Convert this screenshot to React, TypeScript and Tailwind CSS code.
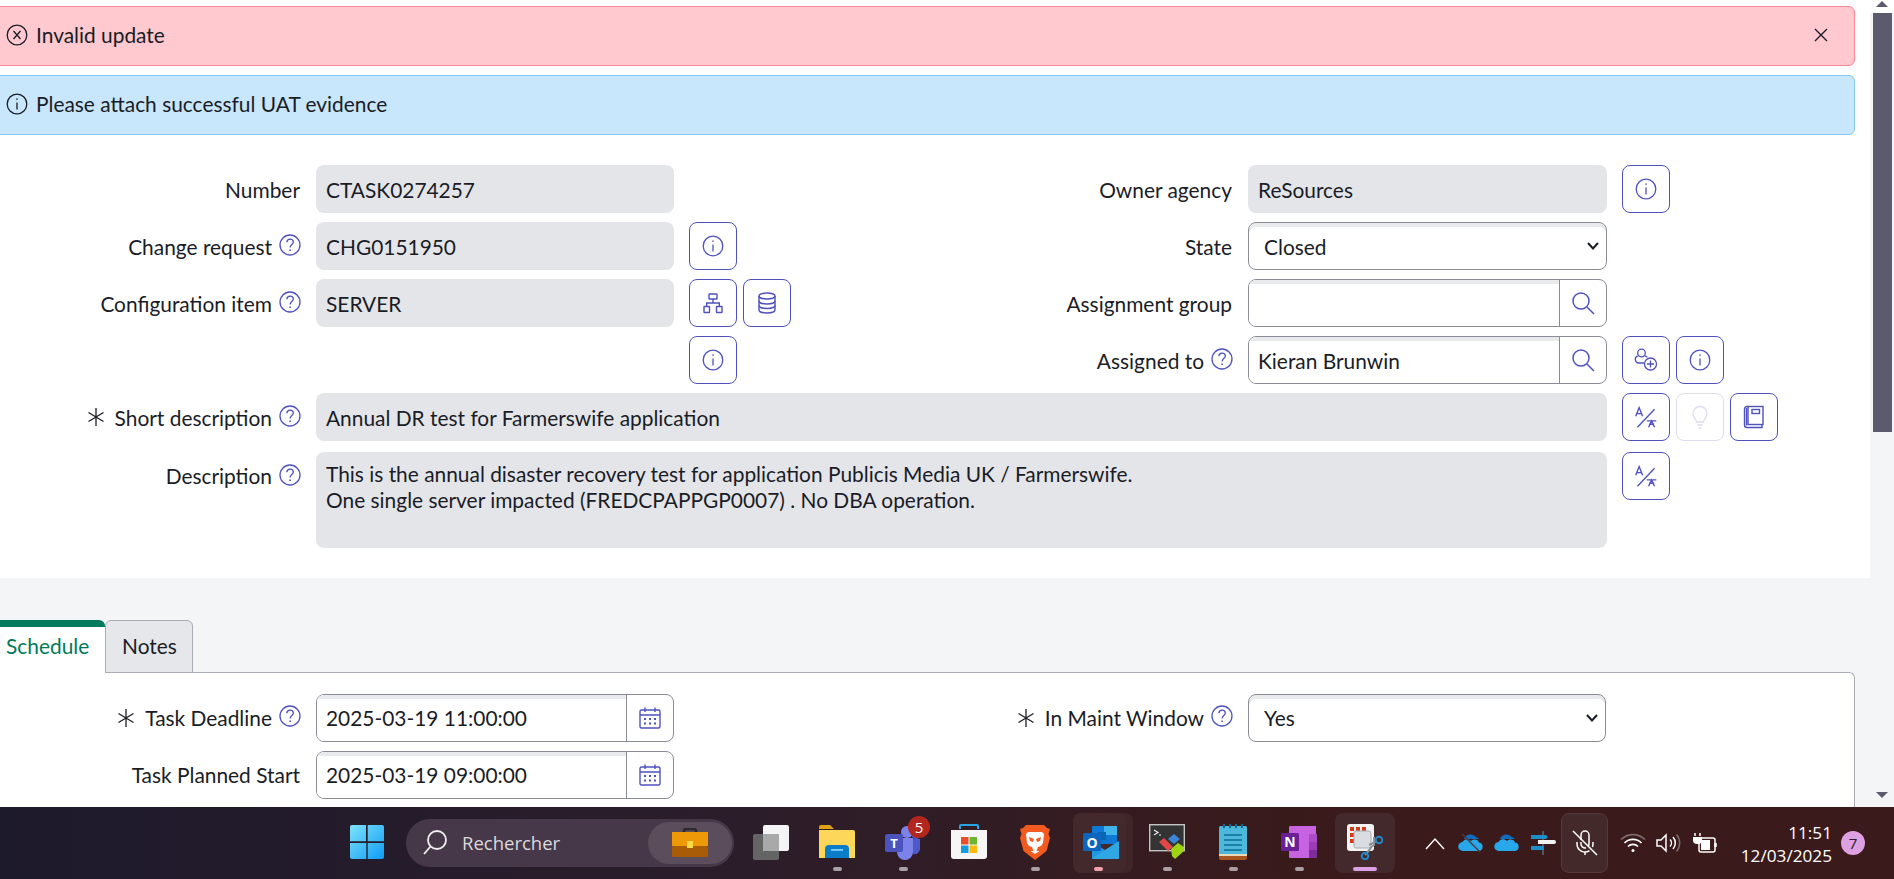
import React from "react";

const line = "fill-none stroke-current";

function InfoIcon({ size = 24 }: { size?: number }) {
  return (
    <svg width={size} height={size} viewBox="0 0 24 24" className={line} strokeWidth={1.3}>
      <circle cx="12" cy="12" r="9.8" />
      <path d="M12 10.500v7" />
      <path d="M12 6.600v1.200" strokeWidth={1.6} />
    </svg>
  );
}

function HelpIcon() {
  return (
    <svg width="24" height="24" viewBox="0 0 24 24" className={`${line} -mr-[2px] -mt-[3px] text-[#4f52bd]`} strokeWidth={1.3}>
      <circle cx="12" cy="12" r="10" />
      <path d="M8.800 9.200c.2-2 1.600-3.100 3.300-3.100 1.800 0 3.200 1.200 3.200 2.900 0 2.400-3.200 2.600-3.200 5.400" />
      <path d="M12.100 16.600v1.300" strokeWidth={1.6} />
    </svg>
  );
}

function Asterisk() {
  return (
    <svg width="18" height="18" viewBox="0 0 18 18" className={`${line} mr-[4px] text-[#1c1c26]`} strokeWidth={1.3}>
      <path d="M9 0v18M1.500 4.500l15 9M16.500 4.500l-15 9" />
    </svg>
  );
}

function TranslateIcon() {
  return (
    <svg width="24" height="24" viewBox="0 0 28 28" className={line} strokeWidth={1.6}>
      <path d="M2 13l4-10 4 10M3.400 10h5.200" />
      <path d="M4 26L24 5" />
      <path d="M15 18.500h11M17 26l3.500-7.500 3.500 7.500M17.500 22.500h6" />
    </svg>
  );
}

function MagnifierIcon() {
  return (
    <svg width="24" height="24" viewBox="0 0 24 24" className={line} strokeWidth={1.5}>
      <circle cx="10" cy="10" r="8" />
      <path d="M16 16l7 7" />
    </svg>
  );
}

function CalendarIcon() {
  return (
    <svg width="24" height="24" viewBox="0 0 24 24" className={line} strokeWidth={1.4}>
      <rect x="2" y="4" width="20" height="18" rx="1.500" />
      <path d="M2 9h20M7 1.500v4.500M17 1.500v4.500" />
      <path d="M6 13h2M11 13h2M16 13h2M6 17.500h2M11 17.500h2M16 17.500h2" strokeWidth={2} />
    </svg>
  );
}

function NetworkIcon() {
  return (
    <svg width="24" height="24" viewBox="0 0 24 24" className={line} strokeWidth={1.4}>
      <rect x="8" y="3" width="8" height="5" rx="0.5" />
      <rect x="3" y="15.500" width="5.500" height="6" rx="0.5" />
      <rect x="15.500" y="15.500" width="5.500" height="6" rx="0.5" />
      <path d="M12 8v4M5.700 15.500V12h12.600v3.500" />
    </svg>
  );
}

function DatabaseIcon() {
  return (
    <svg width="24" height="24" viewBox="0 0 24 24" className={line} strokeWidth={1.4}>
      <ellipse cx="12" cy="5" rx="8" ry="3" />
      <path d="M4 5v14c0 1.700 3.600 3 8 3s8-1.300 8-3V5" />
      <path d="M4 10c0 1.700 3.600 3 8 3s8-1.300 8-3M4 14.500c0 1.700 3.600 3 8 3s8-1.300 8-3" />
    </svg>
  );
}

function UserPlusIcon() {
  return (
    <svg width="26" height="26" viewBox="0 0 26 26" className={line} strokeWidth={1.3}>
      <circle cx="8.500" cy="6" r="3.800" />
      <path d="M11 16H6a3.700 3.700 0 0 1-1.200-7.200M12 8.800c.9.300 1.700.8 2.300 1.600" />
      <circle cx="17.500" cy="17" r="6" />
      <path d="M17.500 13.500v7M14 17h7" />
    </svg>
  );
}

function BulbIcon() {
  return (
    <svg width="24" height="26" viewBox="0 0 24 26" className={line} strokeWidth={1.3}>
      <path d="M8.500 18c0-2.500-3.500-4-3.500-8.500a7 7 0 0 1 14 0c0 4.500-3.500 6-3.500 8.500z" />
      <path d="M9.500 21h5M10.500 24h3" />
    </svg>
  );
}

function BookIcon() {
  return (
    <svg width="22" height="24" viewBox="0 0 22 24" className={line} strokeWidth={1.4}>
      <rect x="5" y="1.500" width="15" height="18" />
      <path d="M5 1.500H4A2.500 2.500 0 0 0 1.500 4v16A2.500 2.500 0 0 0 4 22.500h15V19.500" />
      <path d="M3.500 3v17.500" />
      <rect x="9" y="4.500" width="7.500" height="4" />
    </svg>
  );
}

function IconButton({ children, disabled }: { children: React.ReactNode; disabled?: boolean }) {
  return (
    <button
      className={
        disabled
          ? "flex h-12 w-12 items-center justify-center rounded-lg border-[1.5px] border-[#dcdcf2] text-[#dcdcf2]"
          : "flex h-12 w-12 items-center justify-center rounded-lg border-[1.5px] border-[#4f52bd] text-[#4f52bd]"
      }
    >
      {children}
    </button>
  );
}

function Label({ text, required, help, tight }: { text: string; required?: boolean; help?: boolean; tight?: boolean }) {
  return (
    <div className="flex h-12 w-[300px] shrink-0 items-center justify-end gap-[6px] text-[#1a1c26]">
      {required && <Asterisk />}
      <span className={tight ? "" : "pt-[2px]"}>{text}</span>
      {help && <HelpIcon />}
    </div>
  );
}

function ReadField({ value }: { value?: string }) {
  return <div className="flex h-12 items-center rounded-lg bg-[#e4e5e9] px-[10px] pt-[2px] text-[#1a1c26]">{value}</div>;
}

function SelectField({ value, flat }: { value: string; flat?: boolean }) {
  return (
    <div className="relative">
      <select
        defaultValue={value}
        className={
          flat
            ? "h-12 w-full appearance-none rounded-lg border-[1.5px] border-[#8a8d97] bg-white pl-[15px] pr-1 text-[#1a1c26] shadow-[inset_0_4px_0_0_#e9eaec]"
            : "h-12 w-full appearance-none rounded-lg border-[1.5px] border-[#8a8d97] bg-white pl-[15px] pr-1 pt-[2px] text-[#1a1c26] shadow-[inset_0_4px_0_0_#e9eaec]"
        }
      >
        <option>{value}</option>
      </select>
      <svg width="12" height="8" viewBox="0 0 12 8" className={`${line} absolute right-[8px] top-[20px] text-[#1a1c26]`} strokeWidth={2}>
        <path d="M1 1l5 5.500L11 1" />
      </svg>
    </div>
  );
}

function AddonField({ value, icon, flat }: { value?: string; icon: React.ReactNode; flat?: boolean }) {
  return (
    <div className="flex h-12 overflow-hidden rounded-lg border-[1.5px] border-[#8a8d97] bg-white">
      <input
        readOnly
        value={value ?? ""}
        className={
          flat
            ? "min-w-0 flex-1 bg-white px-[9px] text-[#1a1c26] shadow-[inset_0_4px_0_0_#e9eaec] outline-none"
            : "min-w-0 flex-1 bg-white px-[9px] pt-[2px] text-[#1a1c26] shadow-[inset_0_4px_0_0_#e9eaec] outline-none"
        }
      />
      <div className="flex w-[47px] shrink-0 items-center justify-center border-l-[1.5px] border-[#8a8d97] text-[#4f52bd]">
        {icon}
      </div>
    </div>
  );
}

function Half({
  label,
  field,
  buttons,
  right,
}: {
  label?: React.ReactNode;
  field?: React.ReactNode;
  buttons?: React.ReactNode;
  right?: boolean;
}) {
  return (
    <div className={right ? "flex shrink-0 items-start" : "flex w-[932px] shrink-0 items-start"}>
      <div className="w-[300px] shrink-0">{label}</div>
      <div className={right ? "ml-4 w-[359px] shrink-0" : "ml-4 w-[358px] shrink-0"}>{field}</div>
      <div className="ml-[15px] flex gap-[6px]">{buttons}</div>
    </div>
  );
}

function Alert({ tone, icon, text, close }: { tone: string; icon: React.ReactNode; text: string; close?: boolean }) {
  return (
    <div className={`-ml-[10px] mr-[15px] flex h-[60px] items-center rounded-md border-[1.5px] pb-[2px] pl-[14px] pr-[26px] text-[#1a1c26] ${tone}`}>
      {icon}
      <span className="ml-[7px] flex-1">{text}</span>
      {close && (
        <svg width="14" height="14" viewBox="0 0 14 14" className={line} strokeWidth={1.4}>
          <path d="M1 1l12 12M13 1L1 13" />
        </svg>
      )}
    </div>
  );
}

function Form() {
  return (
    <div className="flex flex-col bg-white pb-[30px]">
      <div className="flex flex-col gap-[9px] pt-[6px]">
        <Alert
          tone="border-[#ff8796] bg-[#ffc9cf]"
          close
          text="Invalid update"
          icon={
            <svg width="24" height="24" viewBox="0 0 24 24" className={line} strokeWidth={1.3}>
              <circle cx="12" cy="12" r="9.800" />
              <path d="M8.500 8l7 8M15.500 8l-7 8" />
            </svg>
          }
        />
        <Alert tone="border-[#86c8f8] bg-[#c8e6fc]" text="Please attach successful UAT evidence" icon={<InfoIcon size={24} />} />
      </div>

      <div className="mt-[30px] flex flex-col gap-[9px]">
        <div className="flex">
          <Half label={<Label text="Number" />} field={<ReadField value="CTASK0274257" />} />
          <Half
            right
            label={<Label text="Owner agency" />}
            field={<ReadField value="ReSources" />}
            buttons={<IconButton><InfoIcon /></IconButton>}
          />
        </div>
        <div className="flex">
          <Half
            label={<Label text="Change request" help />}
            field={<ReadField value="CHG0151950" />}
            buttons={<IconButton><InfoIcon /></IconButton>}
          />
          <Half right label={<Label text="State" />} field={<SelectField value="Closed" />} />
        </div>
        <div className="flex">
          <Half
            label={<Label text="Configuration item" help />}
            field={<ReadField value="SERVER" />}
            buttons={
              <>
                <IconButton><NetworkIcon /></IconButton>
                <IconButton><DatabaseIcon /></IconButton>
              </>
            }
          />
          <Half right label={<Label text="Assignment group" />} field={<AddonField icon={<MagnifierIcon />} />} />
        </div>
        <div className="flex">
          <Half buttons={<IconButton><InfoIcon /></IconButton>} />
          <Half
            right
            label={<Label text="Assigned to" help />}
            field={<AddonField value="Kieran Brunwin" icon={<MagnifierIcon />} />}
            buttons={
              <>
                <IconButton><UserPlusIcon /></IconButton>
                <IconButton><InfoIcon /></IconButton>
              </>
            }
          />
        </div>
        <div className="flex items-start">
          <Label text="Short description" required help />
          <div className="ml-4 w-[1291px]">
            <ReadField value="Annual DR test for Farmerswife application" />
          </div>
          <div className="ml-[15px] flex gap-[6px]">
            <IconButton><TranslateIcon /></IconButton>
            <IconButton disabled><BulbIcon /></IconButton>
            <IconButton><BookIcon /></IconButton>
          </div>
        </div>
        <div className="mt-[2px] flex items-start">
          <Label text="Description" help tight />
          <div className="ml-4 h-24 w-[1291px] rounded-lg bg-[#e4e5e9] px-[10px] pt-[9px] leading-[26px] text-[#1a1c26]">
            This is the annual disaster recovery test for application Publicis Media UK / Farmerswife.
            <br />
            One single server impacted (FREDCPAPPGP0007) . No DBA operation.
          </div>
          <div className="ml-[15px]">
            <IconButton><TranslateIcon /></IconButton>
          </div>
        </div>
      </div>
    </div>
  );
}

function Tabs() {
  return (
    <div className="relative z-10 mt-[42px] -mb-[1.5px] flex h-[53px] items-stretch">
      <div className="w-[105px] rounded-tr-md border-t-[7px] border-[#007a5a] bg-white pl-[6px] pt-[3px] text-[#007a5a]">Schedule</div>
      <div className="w-[88px] rounded-t-md border-[1.5px] border-[#a9acb5] bg-[#e5e7eb] pl-[16px] pt-[9px] text-[#1a1c26]">Notes</div>
    </div>
  );
}

function SchedulePanel() {
  return (
    <div className="mr-[15px] flex flex-col gap-[9px] rounded-tr-md border-t-[1.5px] border-r-[1.5px] border-[#a9acb5] bg-white pb-4 pt-[21px]">
      <div className="flex">
        <Half
          label={<Label text="Task Deadline" required help tight />}
          field={<AddonField flat value="2025-03-19 11:00:00" icon={<CalendarIcon />} />}
        />
        <div className="flex items-start">
          <Label text="In Maint Window" required help tight />
          <div className="ml-4 w-[358px]">
            <SelectField flat value="Yes" />
          </div>
        </div>
      </div>
      <div className="flex">
        <Half
          label={<Label text="Task Planned Start" tight />}
          field={<AddonField flat value="2025-03-19 09:00:00" icon={<CalendarIcon />} />}
        />
      </div>
    </div>
  );
}

function Scrollbar() {
  return (
    <div className="flex w-[24px] shrink-0 flex-col bg-[#f4f5f7]">
      <div className="flex h-[13px] justify-center bg-white pt-[1px]">
        <div className="h-0 w-0 border-x-[6px] border-b-[6px] border-x-transparent border-b-[#5c5b6e]" />
      </div>
      <div className="ml-[3px] h-[419px] w-[19px] bg-[#5c5b6e]" />
      <div className="flex-1" />
      <div className="flex h-[18px] justify-center pt-[3px]">
        <div className="h-0 w-0 border-x-[6px] border-t-[6px] border-x-transparent border-t-[#5c5b6e]" />
      </div>
    </div>
  );
}

/* taskbar pictures, all on a 36 unit square */
function WindowsLogo() {
  return (
    <svg width="36" height="36" viewBox="0 0 36 36">
      <defs>
        <linearGradient id="win" x1="0" y1="0" x2="1" y2="1">
          <stop offset="0" stopColor="#7fe3fb" />
          <stop offset="1" stopColor="#0f9bf5" />
        </linearGradient>
      </defs>
      <path fill="url(#win)" d="M1 3a2 2 0 0 1 2-2h14v16.300H1zM18.700 1H33a2 2 0 0 1 2 2v14.300H18.700zM1 19h16.300v16H3a2 2 0 0 1-2-2zM18.700 19H35v14a2 2 0 0 1-2 2H18.700z" />
    </svg>
  );
}

function Briefcase() {
  return (
    <svg width="36" height="30" viewBox="0 0 36 30">
      <path d="M12 5V2.500A2 2 0 0 1 14 1h8a2 2 0 0 1 2 1.500V5" fill="none" stroke="#2b2b2b" strokeWidth="2.500" />
      <rect y="4" width="36" height="14" fill="#ee9a08" />
      <rect y="18" width="36" height="11" rx="1.500" fill="#a85c08" />
      <rect x="15" y="13" width="6" height="7" fill="#fbd84a" />
    </svg>
  );
}

function TaskView() {
  return (
    <svg width="36" height="36" viewBox="0 0 36 36">
      <rect x="10" y="1" width="26" height="26" rx="2" fill="#f4f4f4" />
      <rect x="0" y="10" width="26" height="26" rx="2" fill="#6a6a6a" fillOpacity="0.92" />
      <rect x="10" y="10" width="16" height="17" fill="#a9a9a9" />
    </svg>
  );
}

function Explorer() {
  return (
    <svg width="36" height="34" viewBox="0 0 36 34">
      <path d="M0 2a2 2 0 0 1 2-2h9l4 4H0z" fill="#e0a211" />
      <path d="M0 5h34a2 2 0 0 1 2 2v26H0z" fill="#fdd75a" />
      <path d="M6 24a4 4 0 0 1 4-4h16a4 4 0 0 1 4 4v9H6z" fill="#0a7cc8" />
      <rect x="12" y="24" width="12" height="1.800" fill="#7fd3fb" />
    </svg>
  );
}

function Teams() {
  return (
    <svg width="36" height="36" viewBox="0 0 36 36">
      <circle cx="22" cy="8" r="6" fill="#7b83eb" />
      <circle cx="31" cy="11" r="4" fill="#5059c9" />
      <path d="M12 14h16v14a8 8 0 0 1-16 0z" fill="#7b83eb" />
      <path d="M28 15h7v10a5.500 5.500 0 0 1-7 5z" fill="#5059c9" />
      <rect x="0" y="10" width="18" height="18" rx="2" fill="#4b53bc" />
      <text x="9" y="24" textAnchor="middle" fontSize="13" fontWeight="700" fill="#fff" fontFamily="Open Sans, sans-serif">T</text>
    </svg>
  );
}

function Store() {
  return (
    <svg width="36" height="36" viewBox="0 0 36 36">
      <path d="M9 5V2a1 1 0 0 1 1-1h16a1 1 0 0 1 1 1v3" fill="none" stroke="#27a4e4" strokeWidth="2" />
      <path d="M0 6h36v26a3 3 0 0 1-3 3H3a3 3 0 0 1-3-3z" fill="#f6f6f6" />
      <rect x="10" y="13" width="7.500" height="7.500" fill="#e9502a" />
      <rect x="18.500" y="13" width="7.500" height="7.500" fill="#6cb630" />
      <rect x="10" y="21.500" width="7.500" height="7.500" fill="#149cdc" />
      <rect x="18.500" y="21.500" width="7.500" height="7.500" fill="#fbb80e" />
    </svg>
  );
}

function Brave() {
  return (
    <svg width="32" height="36" viewBox="0 0 32 36">
      <path d="M7 1h18l3 3 3 1-1.500 5L31 14l-3.500 13L16 36 4.500 27 1 14l1.500-4L1 5l3-1z" fill="#f25a1f" />
      <path d="M9 8h14l2 2-1 9-2 3-3 1-1.500 4h3L16 30l-4.500-3h3L13 23l-3-1-2-3-1-9z" fill="#fff" />
      <path d="M10 13l5 2-1 3-3-1zM22 13l-5 2 1 3 3-1z" fill="#f25a1f" />
    </svg>
  );
}

function Outlook() {
  return (
    <svg width="36" height="36" viewBox="0 0 36 36">
      <rect x="9" y="2" width="25" height="18" rx="1" fill="#0f78d4" />
      <rect x="21" y="2" width="13" height="9" fill="#3fb4ea" />
      <rect x="15" y="8" width="8" height="8" fill="#0a64b4" />
      <path d="M9 18l13 8 14-9v17a1 1 0 0 1-1 1H10a1 1 0 0 1-1-1z" fill="#1e98e0" />
      <path d="M9 34l13-8 14-9v17a1 1 0 0 1-1 1H10z" fill="#3fb4ea" opacity="0.55" />
      <rect x="0" y="9" width="18" height="18" rx="1.500" fill="#0c66bd" />
      <text x="9" y="23.500" textAnchor="middle" fontSize="14" fontWeight="700" fill="#fff" fontFamily="Open Sans, sans-serif">O</text>
    </svg>
  );
}

function TerminalApp() {
  return (
    <svg width="36" height="36" viewBox="0 0 36 36">
      <rect x="0.700" y="0.700" width="34.600" height="26" fill="#333" stroke="#c4c4c4" strokeWidth="1.400" />
      <path d="M5 6l4 2.500L5 11" fill="none" stroke="#eee" strokeWidth="1.200" />
      <rect x="10" y="10.500" width="2" height="1" fill="#eee" />
      <path d="M10 18l5-4 9 9-5 4z" fill="#e04848" />
      <path d="M19 15l6-5 6 5-6 5z" fill="#3d85d8" />
      <path d="M22 25l7-6 6 4v4l-9 8-3-3z" fill="#9fd414" />
    </svg>
  );
}

function Notepad() {
  return (
    <svg width="28" height="36" viewBox="0 0 28 36">
      <rect y="2" width="28" height="29" rx="1.500" fill="#4db8dc" />
      <path d="M0 31h28v3a2 2 0 0 1-2 2H2a2 2 0 0 1-2-2z" fill="#a9551f" />
      <path d="M0 30h28v2H0z" fill="#e8d9b8" />
      <path d="M5 0v4M11 0v4M17 0v4M23 0v4" stroke="#0c6d93" strokeWidth="2" />
      <path d="M5 11h18M5 16h18M5 21h18M5 26h18" stroke="#0c6d93" strokeWidth="1.500" />
    </svg>
  );
}

function OneNote() {
  return (
    <svg width="36" height="32" viewBox="0 0 36 32">
      <path d="M8 1a1 1 0 0 1 1-1h26v32H9a1 1 0 0 1-1-1z" fill="#c763e0" />
      <rect x="28" y="8" width="8" height="8" fill="#ac4bc8" />
      <rect x="28" y="16" width="8" height="8" fill="#9b3cb4" />
      <rect x="28" y="24" width="8" height="8" fill="#7e2e98" />
      <rect x="0" y="7" width="18" height="18" rx="1.500" fill="#6a1f98" />
      <text x="9" y="21" textAnchor="middle" fontSize="14" fontWeight="700" fill="#fff" fontFamily="Open Sans, sans-serif">N</text>
    </svg>
  );
}

function Snipping() {
  return (
    <svg width="36" height="36" viewBox="0 0 36 36">
      <rect width="27" height="27" rx="3" fill="#f3f3f3" />
      <path d="M3 3h4v4H3zM9 3h4v4H9zM15 3h4v4h-4zM3 9h4v4H3zM3 15h4v4H3z" fill="#d43a1a" />
      <rect x="7" y="7" width="17" height="17" rx="2" fill="#d9dde2" stroke="#a9adb3" />
      <path d="M27 13v8l-4 3" fill="none" stroke="#8d9298" strokeWidth="2" />
      <path d="M24 24l-6 7M22 21l8-4" stroke="#8d9298" strokeWidth="2" />
      <circle cx="32" cy="16" r="3.300" fill="none" stroke="#1e88c9" strokeWidth="2" />
      <circle cx="18" cy="32" r="3.300" fill="none" stroke="#1e88c9" strokeWidth="2" />
    </svg>
  );
}

function Slot({ children, dot }: { children: React.ReactNode; dot?: boolean }) {
  return (
    <div className="relative flex h-[60px] w-[66px] shrink-0 items-center justify-center pb-[2px]">
      {children}
      {dot && <div className="absolute bottom-[2px] left-[29px] h-[4px] w-[9px] rounded-full bg-[#a8a0a4]" />}
    </div>
  );
}

function TrayIcon({ children }: { children: React.ReactNode }) {
  return <div className="flex w-[36px] shrink-0 items-center justify-center">{children}</div>;
}

function OneDrive({ off }: { off?: boolean }) {
  return (
    <svg width="26" height="20" viewBox="0 0 26 20">
      <path d="M6 6a7 7 0 0 1 12-2 6 6 0 0 1 3 2z" fill="#0f6cbd" />
      <path d="M5 18a4.500 4.500 0 0 1-.5-9C6 6 10 5 13 8c3-2.500 7-1.500 8 1.500A4.300 4.300 0 0 1 21 18z" fill="#28a8ea" />
      {off && <path d="M4 1l18 18" stroke="#4a3a3a" strokeWidth="1.500" />}
    </svg>
  );
}

function Taskbar() {
  return (
    <div className="flex h-[72px] shrink-0 items-center bg-gradient-to-r from-[#1d1a2c] via-[#2c1d2a] via-40% to-[#3a1a1a] to-70% pl-[334px] font-['Open_Sans',sans-serif]">
      <Slot><WindowsLogo /></Slot>
      <div className="ml-[6px] flex h-12 w-[328px] shrink-0 items-center rounded-full bg-[#463848] pl-[15px] pr-[2px]">
        <svg width="28" height="28" viewBox="0 0 28 28" className={`${line} text-[#f0eef0]`} strokeWidth={1.8}>
          <circle cx="16" cy="11" r="9" />
          <path d="M9.500 17.500L3 25" />
        </svg>
        <span className="ml-[13px] flex-1 text-[18.5px] text-[#dcd8dc]">Rechercher</span>
        <div className="flex h-[42px] w-[84px] items-center justify-center rounded-full bg-[#5c4d5c]">
          <Briefcase />
        </div>
      </div>
      <div className="ml-[4px] flex">
        <Slot><TaskView /></Slot>
        <Slot dot><Explorer /></Slot>
        <Slot dot>
          <Teams />
          <div className="absolute left-[38px] top-[3px] flex h-[22px] w-[22px] items-center justify-center rounded-full bg-[#b3261e] text-[15px] text-white">5</div>
        </Slot>
        <Slot><Store /></Slot>
        <Slot dot><Brave /></Slot>
        <div className="relative flex h-[60px] w-[66px] shrink-0 items-center justify-center pb-[2px]">
          <div className="absolute left-[5px] top-0 h-[60px] w-[60px] rounded-lg bg-[#3e2528]" />
          <div className="absolute left-[5px] top-0 h-[60px] w-[53px] rounded-lg bg-[#44292c]" />
          <div className="relative"><Outlook /></div>
          <div className="absolute bottom-[2px] left-[26px] h-[4px] w-[9px] rounded-full bg-[#f2a4ac]" />
        </div>
        <Slot dot><TerminalApp /></Slot>
        <Slot dot><Notepad /></Slot>
        <Slot dot><OneNote /></Slot>
        <div className="relative flex h-[60px] w-[66px] shrink-0 items-center justify-center pb-[2px]">
          <div className="absolute left-[3px] top-0 h-[60px] w-[60px] rounded-lg bg-[#44292c]" />
          <div className="relative"><Snipping /></div>
          <div className="absolute bottom-[2px] left-[21px] h-[4px] w-[24px] rounded-full bg-[#dca0e4]" />
        </div>
      </div>

      <div className="ml-[19px] flex items-center text-white">
        <TrayIcon>
          <svg width="20" height="13" viewBox="0 0 20 13" className={line} strokeWidth={1.4}>
            <path d="M1 12l9-10 9 10" />
          </svg>
        </TrayIcon>
        <TrayIcon><OneDrive off /></TrayIcon>
        <TrayIcon><OneDrive /></TrayIcon>
        <TrayIcon>
          <svg width="26" height="26" viewBox="0 0 26 26">
            <path d="M13 1v24" stroke="#5a6a78" strokeWidth="1.500" />
            <path d="M1 5h15l2 2-2 2H1z" fill="#1b8fc8" />
            <path d="M8 10h16a1.500 1.500 0 0 1 0 4H8z" fill="#f2f2f2" />
            <path d="M1 16h13v4H1z" fill="#1b8fc8" />
          </svg>
        </TrayIcon>
        <div className="flex h-[60px] w-[47px] shrink-0 items-center justify-center rounded-lg border border-[#56393a] bg-[#44292a]">
          <svg width="26" height="26" viewBox="0 0 26 26" className={line} strokeWidth={1.5}>
            <path d="M9 10V5a4 4 0 0 1 8 0v9a4 4 0 0 1-.8 2.400M9 12v2a4 4 0 0 0 5 3.800" />
            <path d="M5 12v2a8 8 0 0 0 12.500 6.600M21 12v2a8 8 0 0 1-.6 3M13 22v3M1 1l24 24" />
          </svg>
        </div>
        <div className="ml-[7px] flex">
          <TrayIcon>
            <svg width="26" height="20" viewBox="0 0 26 20" className={line} strokeWidth={1.700}>
              <path d="M1 6.500a17 17 0 0 1 24 0" stroke="#7d6a6a" />
              <path d="M4.500 10a12 12 0 0 1 17 0M8 13.500a7 7 0 0 1 10 0" />
              <circle cx="13" cy="17.500" r="1.500" fill="#fff" stroke="none" />
            </svg>
          </TrayIcon>
          <TrayIcon>
            <svg width="26" height="20" viewBox="0 0 26 20" className={line} strokeWidth={1.500}>
              <path d="M1 7h4l5-5v16l-5-5H1z" />
              <path d="M14 6.500a5 5 0 0 1 0 7M17 4a9 9 0 0 1 0 12" />
              <path d="M20.500 1.500a13 13 0 0 1 0 17" stroke="#7d6a6a" />
            </svg>
          </TrayIcon>
          <TrayIcon>
            <svg width="26" height="22" viewBox="0 0 26 22" className={line} strokeWidth={1.500}>
              <rect x="7" y="6" width="16" height="14" rx="2" />
              <path d="M23.500 11v4" strokeWidth="2.500" />
              <rect x="9" y="8" width="9" height="10" fill="#fff" stroke="none" />
              <path d="M3 1v3M8 1v3" />
              <path d="M1 5h9v3a4 4 0 0 1-4 4h-1a4 4 0 0 1-4-4z" fill="#fff" stroke="none" />
            </svg>
          </TrayIcon>
        </div>
      </div>
      <div className="ml-[5px] flex w-[104px] shrink-0 flex-col items-end pt-[2px] text-[17.2px] leading-[23px] text-white">
        <span>11:51</span>
        <span>12/03/2025</span>
      </div>
      <div className="ml-[9px] flex h-6 w-6 shrink-0 items-center justify-center rounded-full bg-[#dda0e0] text-[15px] text-[#2a1a2a]">7</div>
    </div>
  );
}

export default function App() {
  return (
    <div className="flex h-[879px] w-[1894px] flex-col overflow-hidden bg-[#f4f5f7] font-['Lato',sans-serif] text-[20.9px]">
      <div className="flex h-[807px] shrink-0 overflow-hidden">
        <div className="w-[1870px] shrink-0">
          <Form />
          <Tabs />
          <SchedulePanel />
        </div>
        <Scrollbar />
      </div>
      <Taskbar />
    </div>
  );
}
